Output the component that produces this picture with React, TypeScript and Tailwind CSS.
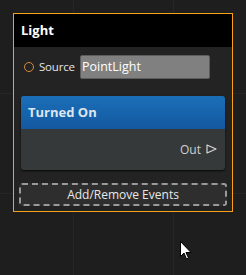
export default function App() {
  return (
    <div className="relative h-[275px] w-[246px] overflow-hidden bg-[#1e1e1e] bg-[linear-gradient(#262626_1px,transparent_1px),linear-gradient(90deg,#262626_1px,transparent_1px)] bg-[size:100px_100px] bg-[position:73px_-7px] pt-[13px] pl-[13px] font-['Open_Sans',sans-serif]">
      {/* node */}
      <div className="flex h-[199px] w-[220px] flex-col border border-[#f7a01a] bg-[#232323]">
        <div className="flex h-[33px] items-center bg-black px-[7px] text-[13px] font-bold text-white">Light</div>

        <div className="mt-[8px] flex items-center pl-[10px] pr-[22px]">
          <span className="h-[10px] w-[10px] rounded-full border-[1.5px] border-[#d88a3a]" />
          <span className="ml-[5px] text-[11.5px] tracking-[-0.2px] text-[#e6e6e6]">Source</span>
          <div className="ml-auto flex h-[24px] w-[130px] items-center rounded-[2px] border border-[#5c5c5c] bg-[#808080] px-[1px] text-[12.5px] text-white">
            PointLight
          </div>
        </div>

        <div className="mx-[7px] mt-[17px] flex h-[74px] flex-col overflow-hidden rounded-[3px] bg-[#35393a] shadow-[0_1px_2px_rgba(0,0,0,0.8)]">
          <div className="flex h-[33px] items-center bg-[linear-gradient(#1a6fb8,#1458a0)] px-[7px] text-[13px] font-bold text-[#dce6f0]">
            Turned On
          </div>
          <div className="flex flex-1 items-center justify-end gap-[5px] pr-[8px] text-[12px] text-[#d0d0d0]">
            <span>Out</span>
            <svg width="11" height="10" viewBox="0 0 11 10" className="mt-[-2px]">
              <path d="M1 1 L10 5 L1 9 Z" fill="none" stroke="#d8d8d8" strokeWidth="1.2" strokeLinejoin="round" />
            </svg>
          </div>
        </div>

        <div className="mx-[5px] mt-[13px] flex h-[23px] items-center justify-center rounded-[3px] border-2 border-dashed border-[#9a9a9a] bg-[#2e2e2e] text-[12px] text-[#e8e8e8]">
          Add/Remove Events
        </div>
      </div>

      {/* cursor */}
      <svg className="absolute left-[180px] top-[241px]" width="13" height="20" viewBox="0 0 13 20">
        <path d="M0.5 0.5 L0.5 15.5 L4 12 L6.5 18 L8.5 17 L6 11.5 L11 11.5 Z" fill="white" stroke="black" strokeWidth="1" />
      </svg>
    </div>
  );
}
